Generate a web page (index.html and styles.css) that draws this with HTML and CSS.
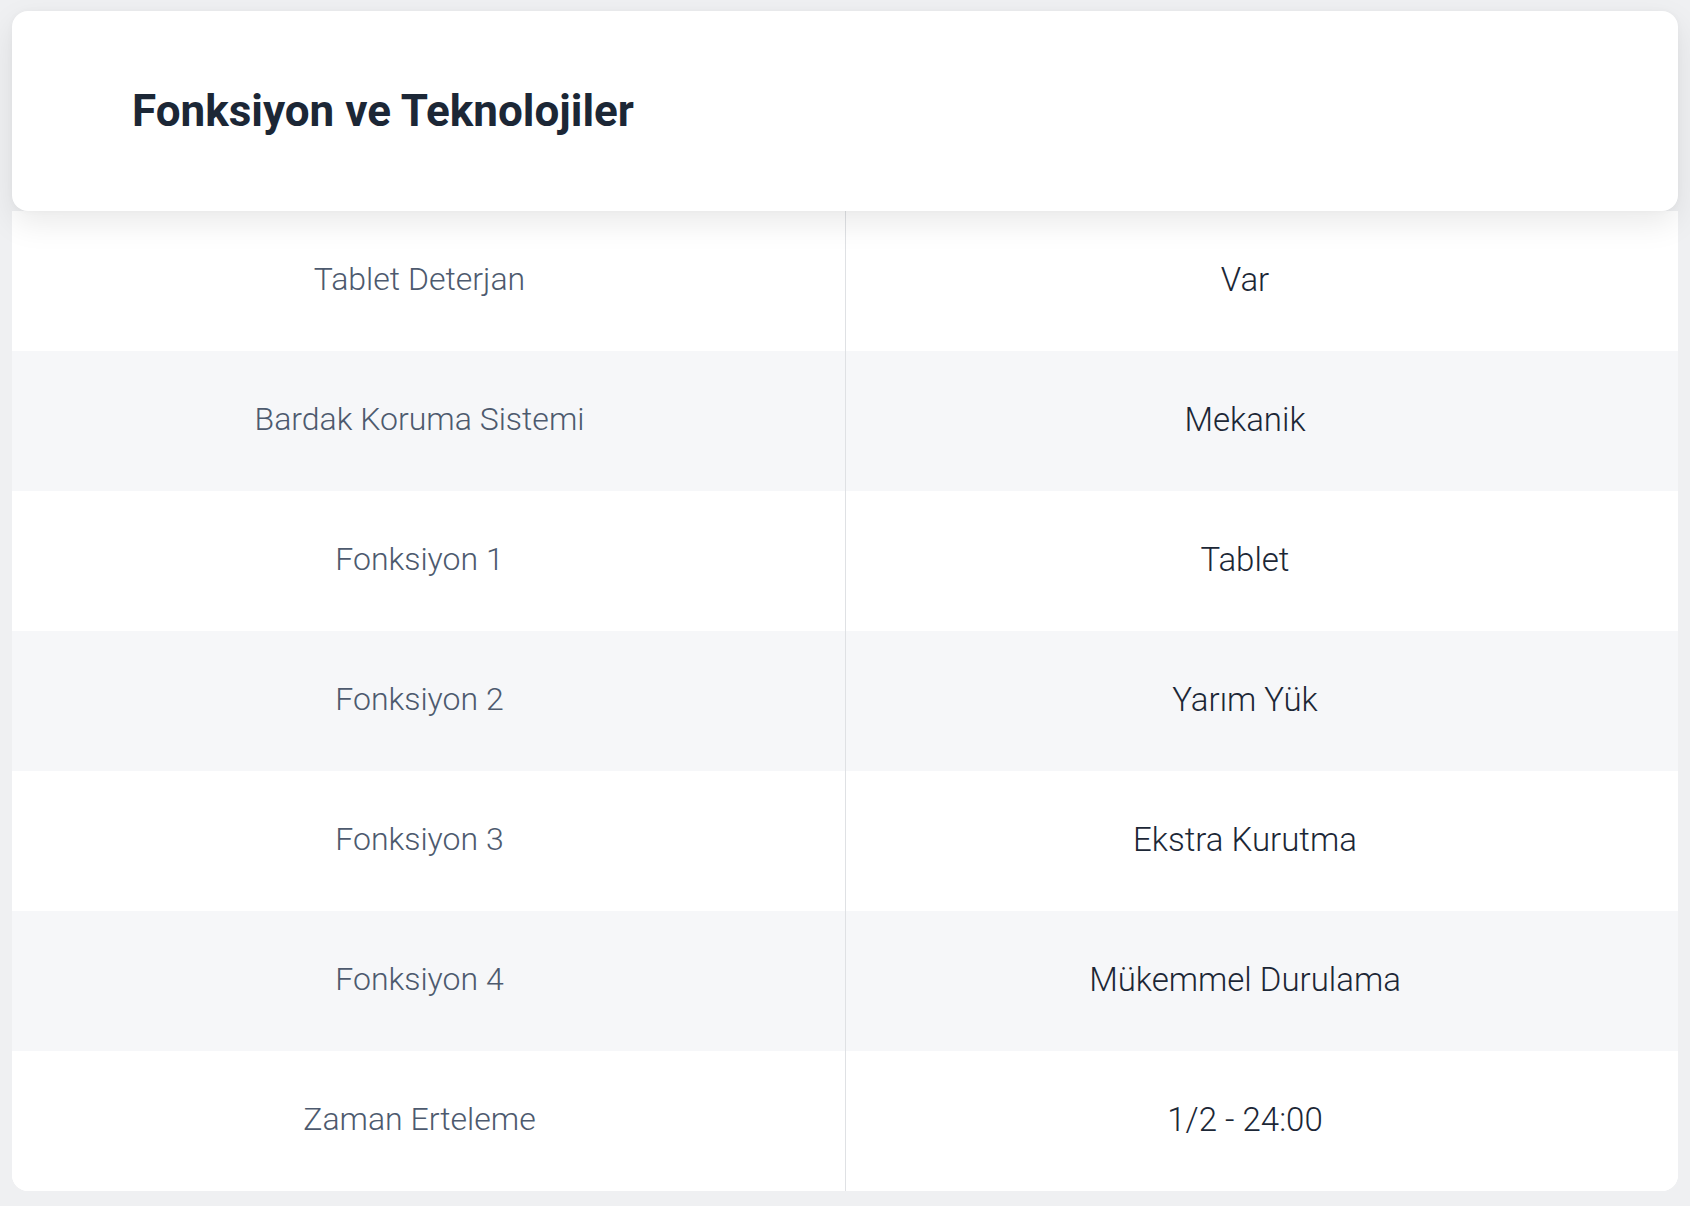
FILE: index.html
```html
<!DOCTYPE html>
<html lang="tr">
<head>
<meta charset="utf-8">
<title>Fonksiyon ve Teknolojiler</title>
<link rel="stylesheet" href="styles.css">
</head>
<body>
<section class="spec-card">
  <header class="spec-header">
    <h2 class="spec-title">Fonksiyon ve Teknolojiler</h2>
  </header>
  <div class="spec-table">
    <div class="spec-row">
      <div class="spec-label">Tablet Deterjan</div>
      <div class="spec-value">Var</div>
    </div>
    <div class="spec-row alt">
      <div class="spec-label">Bardak Koruma Sistemi</div>
      <div class="spec-value">Mekanik</div>
    </div>
    <div class="spec-row">
      <div class="spec-label">Fonksiyon 1</div>
      <div class="spec-value">Tablet</div>
    </div>
    <div class="spec-row alt">
      <div class="spec-label">Fonksiyon 2</div>
      <div class="spec-value">Yarım Yük</div>
    </div>
    <div class="spec-row">
      <div class="spec-label">Fonksiyon 3</div>
      <div class="spec-value">Ekstra Kurutma</div>
    </div>
    <div class="spec-row alt">
      <div class="spec-label">Fonksiyon 4</div>
      <div class="spec-value">Mükemmel Durulama</div>
    </div>
    <div class="spec-row last">
      <div class="spec-label">Zaman Erteleme</div>
      <div class="spec-value">1/2 - 24:00</div>
    </div>
  </div>
</section>
</body>
</html>
```

FILE: styles.css
```css
html, body {
  margin: 0;
  padding: 0;
  background: #eff0f2;
}

body {
  padding: 11px 12px 15px 12px;
  font-family: Roboto, "Noto Sans", "Liberation Sans", sans-serif;
}

.spec-card {
  display: flex;
  flex-direction: column;
}

.spec-header {
  position: relative;
  z-index: 2;
  background: #ffffff;
  border-radius: 16px;
  height: 200px;
  display: flex;
  align-items: center;
  padding: 0 0 0 120px;
  box-shadow: 0 12px 32px rgba(0, 0, 0, 0.085), 0 0 6px rgba(0, 0, 0, 0.03);
}

.spec-title {
  margin: 0;
  font-size: 44px;
  font-weight: 700;
  color: #1c2736;
}

.spec-table {
  background: #ffffff;
  border-radius: 0 0 16px 16px;
  overflow: hidden;
}

.spec-row {
  display: grid;
  grid-template-columns: 834px 1fr;
  height: 140px;
  background: #ffffff;
}

.spec-row.alt {
  background: #f6f7f9;
}

.spec-label,
.spec-value {
  display: flex;
  align-items: center;
  justify-content: center;
  font-weight: 300;
  padding-bottom: 4px;
}

.spec-label {
  font-size: 32px;
  color: #4d5a6e;
  border-right: 1px solid #dfe1e4;
  padding-right: 18px;
}

.spec-value {
  font-size: 33px;
  color: #1c2736;
  padding-right: 34px;
}
```
